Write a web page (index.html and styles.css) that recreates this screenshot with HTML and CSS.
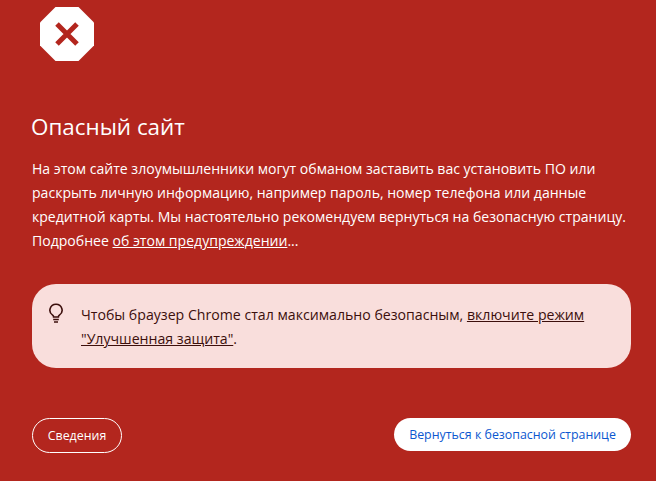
FILE: index.html
```html
<!DOCTYPE html>
<html lang="ru">
<head>
    <meta charset="UTF-8">
    <title>Опасный сайт</title>
    <link rel="stylesheet" href="styles.css">
</head>
<body>
    <div class="page">
        <!-- Stop icon -->
        <svg class="stop-icon" width="54" height="54" viewBox="0 0 54 54">
            <polygon points="15.5,0 38.5,0 54,15.5 54,38.5 38.5,54 15.5,54 0,38.5 0,15.5" fill="#fff"/>
            <path d="M17 17L37 37M37 17L17 37" stroke="#b3261e" stroke-width="5" fill="none"/>
        </svg>

        <h1 class="title">Опасный сайт</h1>
        <p class="message">На этом сайте злоумышленники могут обманом заставить вас установить ПО или раскрыть личную информацию, например пароль, номер телефона или данные кредитной карты. Мы настоятельно рекомендуем вернуться на безопасную страницу. Подробнее <a href="#">об этом предупреждении</a>...</p>

        <!-- Enhanced protection hint -->
        <div class="hint">
            <svg class="hint-icon" width="16" height="20" viewBox="0 0 16 20">
                <path d="M8 1.2a6 6 0 0 0-3.4 11c.7.5 1 1 1 1.8h4.8c0-.8.3-1.3 1-1.8A6 6 0 0 0 8 1.2z" fill="none" stroke="#3c0f0c" stroke-width="1.6"/>
                <path d="M5.2 16.6h5.6M6 19h4" stroke="#3c0f0c" stroke-width="1.5" fill="none"/>
            </svg>
            <p class="hint-text">Чтобы браузер Chrome стал максимально безопасным, <a href="#">включите режим "Улучшенная защита"</a>.</p>
        </div>

        <div class="actions">
            <button class="btn btn-outline">Сведения</button>
            <button class="btn btn-white">Вернуться к безопасной странице</button>
        </div>
    </div>
</body>
</html>
```

FILE: styles.css
```css
/* Global Styles */
html, body {
    height: 100%;
}

body {
    margin: 0;
    background-color: #b3261e;
    color: #fff;
    font-family: "Open Sans", "Noto Sans", sans-serif;
    overflow: hidden;
}

.page {
    padding: 7px 25px 0 32px;
}

.stop-icon {
    display: block;
    margin-left: 8px;
}

.title {
    margin: 51px 0 0 -1px;
    font-size: 22.4px;
    font-weight: 400;
    line-height: 30px;
}

.message {
    margin: 15px 0 0;
    font-size: 14.05px;
    line-height: 24px;
}

.message a {
    color: #fff;
}

/* Hint box */
.hint {
    display: flex;
    gap: 17px;
    margin-top: 31px;
    padding: 19px 16px 17px;
    background-color: #f9dedc;
    border-radius: 24px;
    color: #3c0f0c;
}

.hint-icon {
    flex: none;
}

.hint-text {
    margin: 0;
    font-size: 14.14px;
    line-height: 24px;
}

.hint-text a {
    color: #3c0f0c;
}

/* Buttons */
.actions {
    display: flex;
    justify-content: space-between;
    align-items: flex-start;
    margin-top: 50px;
}

.btn {
    font-family: inherit;
    font-size: 12.4px;
    border-radius: 20px;
    cursor: pointer;
}

.btn-outline {
    width: 90px;
    height: 35px;
    padding: 0;
    background: none;
    border: 1px solid #fff;
    color: #fff;
}

.btn-white {
    width: 237px;
    height: 33px;
    padding: 0;
    background-color: #fff;
    border: none;
    color: #0b57d0;
}
```
